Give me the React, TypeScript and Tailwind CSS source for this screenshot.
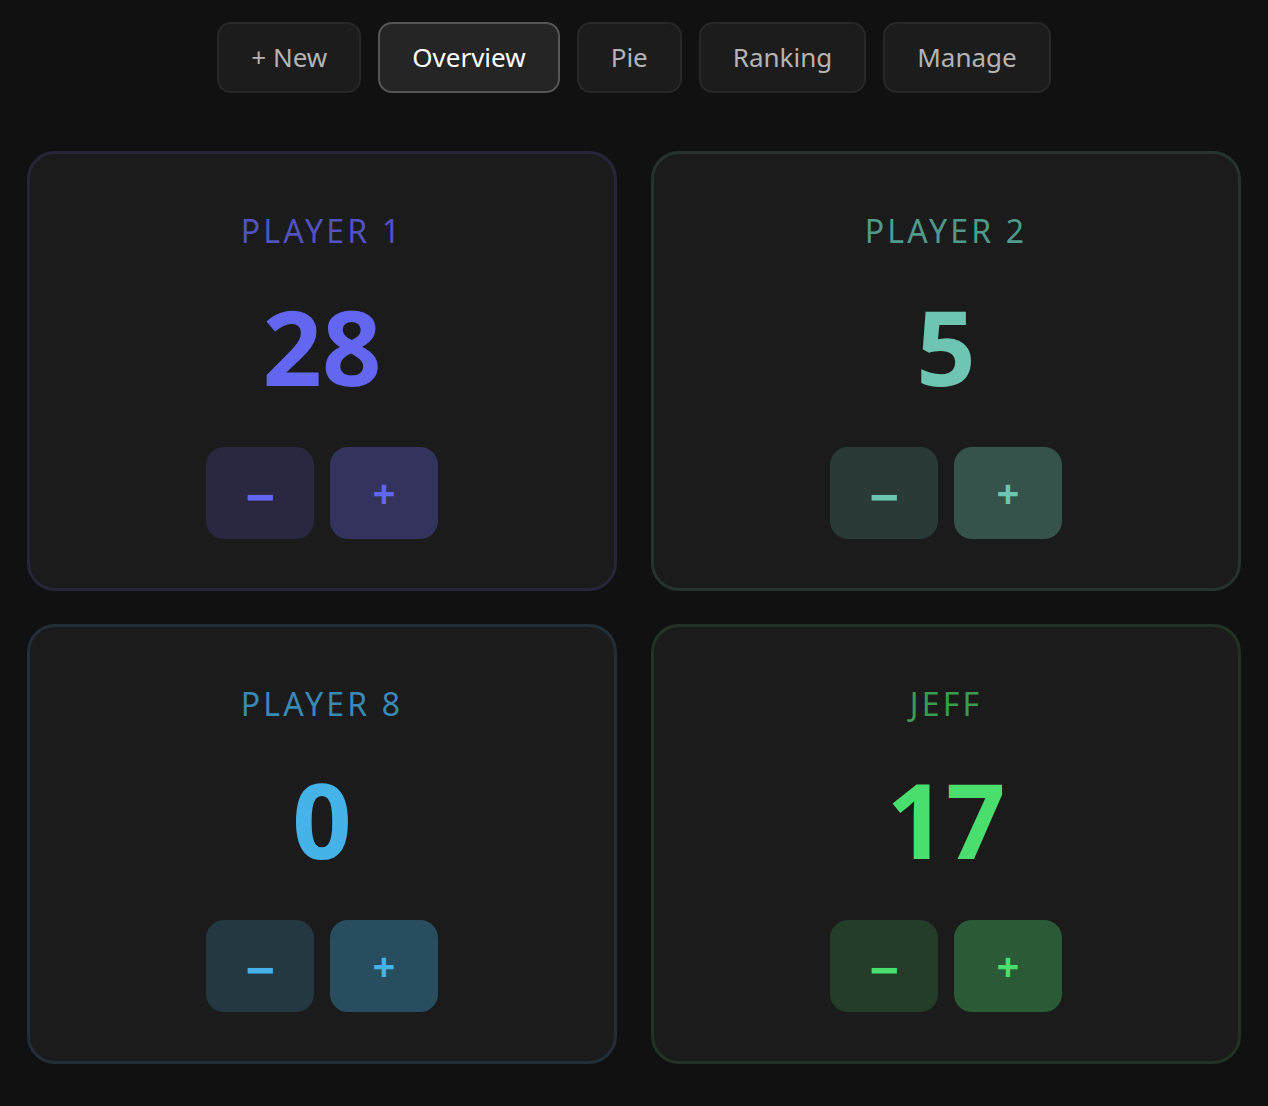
import React, { useState } from 'react';

type Player = {
  id: number;
  name: string;
  score: number;
  border: string;
  title: string;
  number: string;
  minusBg: string;
  plusBg: string;
  sign: string;
};

const initialPlayers: Player[] = [
  {
    id: 1,
    name: 'Player 1',
    score: 28,
    border: 'border-[#26253a]',
    title: 'text-[#5053bd]',
    number: 'text-[#6366f1]',
    minusBg: 'bg-[#292840]',
    plusBg: 'bg-[#33335e]',
    sign: 'text-[#6366f1]',
  },
  {
    id: 2,
    name: 'Player 2',
    score: 5,
    border: 'border-[#263430]',
    title: 'text-[#4f9a8c]',
    number: 'text-[#6dc5b2]',
    minusBg: 'bg-[#2a3b37]',
    plusBg: 'bg-[#35524b]',
    sign: 'text-[#6dc5b2]',
  },
  {
    id: 3,
    name: 'Player 8',
    score: 0,
    border: 'border-[#222f36]',
    title: 'text-[#3a88b4]',
    number: 'text-[#45b2e8]',
    minusBg: 'bg-[#233840]',
    plusBg: 'bg-[#284d5e]',
    sign: 'text-[#45b2e8]',
  },
  {
    id: 4,
    name: 'Jeff',
    score: 17,
    border: 'border-[#233224]',
    title: 'text-[#3c9b4e]',
    number: 'text-[#4ade6e]',
    minusBg: 'bg-[#243d29]',
    plusBg: 'bg-[#2b5a36]',
    sign: 'text-[#4ade6e]',
  },
];

const tabs = ['+ New', 'Overview', 'Pie', 'Ranking', 'Manage'];

const App = () => {
  const [players, setPlayers] = useState(initialPlayers);
  const [active, setActive] = useState('Overview');

  const change = (id: number, delta: number) => {
    setPlayers((prev) => prev.map((p) => (p.id === id ? { ...p, score: p.score + delta } : p)));
  };

  return (
    <div className="min-h-[1106px] bg-[#111111] font-['Noto_Sans',sans-serif]">
      {/* Top navigation */}
      <nav className="flex justify-center gap-[17px] pt-[22px]">
        {tabs.map((tab) => (
          <button
            key={tab}
            onClick={() => setActive(tab)}
            className={
              tab === active
                ? 'h-[71px] px-8 rounded-[14px] border-2 border-[#555555] bg-[#252525] text-[26px] text-white'
                : 'h-[71px] px-8 rounded-[14px] border-2 border-[#282828] bg-[#1c1c1c] text-[26px] text-[#b4b4b4]'
            }
          >
            {tab}
          </button>
        ))}
      </nav>

      {/* Score cards */}
      <div className="grid grid-cols-2 gap-x-[34px] gap-y-[33px] px-[27px] pt-[58px]">
        {players.map((p) => (
          <div
            key={p.id}
            className={`flex h-[440px] flex-col items-center rounded-[28px] border-[3px] bg-[#1b1b1b] pt-[53px] ${p.border}`}
          >
            <h2 className={`text-[32px] leading-[48px] uppercase tracking-[0.1em] ${p.title}`}>{p.name}</h2>
            <div className={`mt-[39px] text-[104px] font-bold leading-none ${p.number}`}>{p.score}</div>
            <div className="mt-[49px] flex gap-4">
              <button
                onClick={() => change(p.id, -1)}
                className={`flex h-[92px] w-[108px] items-center justify-center rounded-[18px] text-[52px] font-bold leading-none ${p.minusBg} ${p.sign}`}
              >
                <span className="translate-y-[3px]">−</span>
              </button>
              <button
                onClick={() => change(p.id, 1)}
                className={`flex h-[92px] w-[108px] items-center justify-center rounded-[18px] text-[40px] font-bold leading-none ${p.plusBg} ${p.sign}`}
              >
                +
              </button>
            </div>
          </div>
        ))}
      </div>
    </div>
  );
};

export default App;
